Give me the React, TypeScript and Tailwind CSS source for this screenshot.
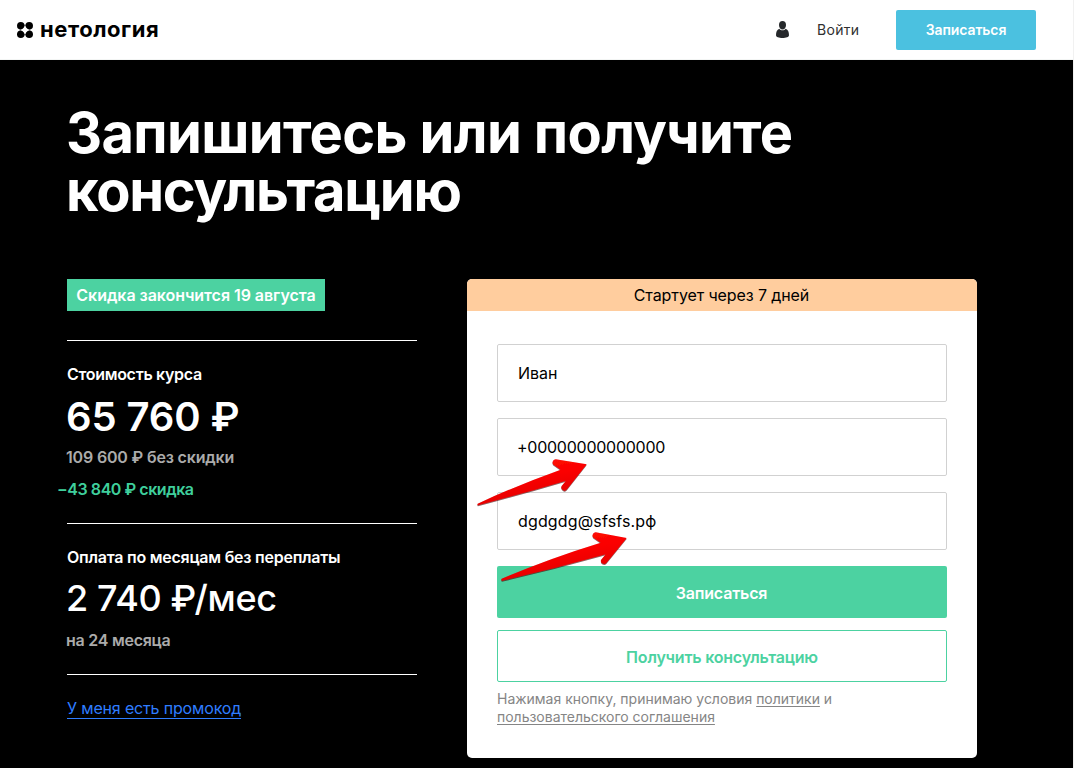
import type { ReactNode } from "react";

function LogoMark() {
  return (
    <svg width="16" height="16" viewBox="0 0 16 16" className="shrink-0" fill="#000">
      <circle cx="3.8" cy="3.8" r="3.8" />
      <circle cx="12.2" cy="3.8" r="3.8" />
      <circle cx="3.8" cy="12.2" r="3.8" />
      <circle cx="12.2" cy="12.2" r="3.8" />
      <path d="M6.500 2.700H9.500V4.700H6.500ZM6.500 11.300H9.500V13.300H6.500ZM2.700 6.500H4.700V9.500H2.700ZM11.300 6.500H13.300V9.500H11.300Z" fillOpacity="0.3" />
      <path d="M8 3.800L9.700 6.300L12.200 8L9.700 9.700L8 12.200L6.300 9.700L3.800 8L6.300 6.300Z" fill="#fff" />
    </svg>
  );
}

function UserIcon() {
  return (
    <svg width="13" height="17" viewBox="0 0 13 17" fill="#25282b">
      <path d="M6.5 0C8.8 0 10 1.5 10 3.9C10 6.500 8.600 8.600 6.500 8.600C4.400 8.600 3 6.500 3 3.900C3 1.500 4.200 0 6.500 0Z" />
      <path d="M3.300 7.700C4.200 8.800 5.200 9.300 6.500 9.300C7.800 9.300 8.800 8.800 9.700 7.700C12 8.500 13 10.800 13 14.200C13 15.900 10 17 6.500 17C3 17 0 15.900 0 14.200C0 10.800 1 8.500 3.300 7.700Z" />
    </svg>
  );
}

function Arrows() {
  return (
    <svg width="180" height="150" viewBox="0 0 540 450" className="pointer-events-none absolute left-0 top-[156px]">
      <defs>
        <linearGradient id="arrow" x1="0" y1="0" x2="0.4" y2="1">
          <stop offset="0" stopColor="#ff1010" />
          <stop offset="0.5" stopColor="#fb0300" />
          <stop offset="1" stopColor="#e00000" />
        </linearGradient>
        <filter id="shadow" x="-10%" y="-10%" width="120%" height="125%">
          <feDropShadow dx="0" dy="2.500" stdDeviation="1.500" floodColor="#400" floodOpacity="0.75" />
        </filter>
      </defs>
      <g fill="url(#arrow)" filter="url(#shadow)">
        <path d="M32 206Q30 209 33 211Q165 176 297 137L284 153A9.500 9.500 0 0 0 300 163L359 88L266 73A9.500 9.500 0 0 0 262 91L281 104Q152 150 32 206Z" />
        <path d="M104 431Q101 435 105 437Q260 402 416 358L402 375A9.500 9.500 0 0 0 418 384L479 309L386 292A9.500 9.500 0 0 0 382 310L401 323Q245 371 104 431Z" />
      </g>
    </svg>
  );
}

function Field({ children }: { children: ReactNode }) {
  return (
    <div className="flex h-[58px] items-center rounded-[2px] border border-[#d1d1d1] pl-5 text-base text-black">
      {children}
    </div>
  );
}

export default function App() {
  return (
    <div className="flex h-[768px] w-[1074px] flex-col overflow-hidden border-r border-[#f1f1f1] bg-black font-['Inter',sans-serif]">
      <header className="flex h-[60px] shrink-0 items-center border-b border-[#f3f5f4] bg-white pl-[17px] pr-[37px]">
        <div className="flex items-center gap-[7px]">
          <LogoMark />
          <span className="pb-px text-[22px] font-bold leading-7 tracking-[0.55px] text-black">нетология</span>
        </div>
        <div className="ml-auto flex items-center">
          <UserIcon />
          <span className="ml-[28px] w-[43px] text-sm tracking-[0.3px] text-[#303030]">Войти</span>
          <button className="ml-[36px] h-10 w-[140px] rounded-[2px] bg-[#4bc1e0] text-sm font-semibold tracking-[-0.1px] text-white">
            Записаться
          </button>
        </div>
      </header>

      <main className="flex flex-col pl-[67px] pt-[44px]">
        <h1 className="-ml-px whitespace-nowrap text-[56px] font-bold leading-[58px] text-white">
          <span className="block tracking-[-0.65px]">Запишитесь или получите</span>
          <span className="block tracking-[-1.25px]">консультацию</span>
        </h1>

        <div className="mt-[59px] flex gap-[50px]">
          <section className="flex w-[350px] flex-col items-start whitespace-nowrap text-base leading-6 text-white">
            <div className="flex h-8 w-[258px] items-center justify-center bg-[#4cd2a1] font-semibold tracking-[-0.05px]">
              Скидка закончится 19 августа
            </div>
            <div className="mt-[29px] h-px w-full bg-white" />
            <div className="mt-[21px] font-semibold tracking-[-0.3px]">Стоимость курса</div>
            <div className="mt-[7px] -ml-px text-[40px] font-semibold leading-[48px] tracking-[-0.1px]">65 760 ₽</div>
            <div className="-ml-px mt-1 font-semibold tracking-[-0.17px] text-[#ababab]">109 600 ₽ без скидки</div>
            <div className="mt-2 -ml-[10px] font-semibold tracking-[-0.45px] text-[#3fcf9c]">−43 840 ₽ скидка</div>
            <div className="mt-[22px] h-px w-full bg-white" />
            <div className="mt-[21px] font-semibold tracking-[-0.240px]">Оплата по месяцам без переплаты</div>
            <div className="mt-[7px] -ml-px text-[36px] font-medium leading-[44px] tracking-[-0.350px]">2 740 ₽/мес</div>
            <div className="mt-2 -ml-px font-semibold tracking-[-0.25px] text-[#ababab]">на 24 месяца</div>
            <div className="mt-[22px] h-px w-full bg-white" />
            <a className="mt-[23px] border-b border-[#2f7dff] leading-5 tracking-[-0.160px] text-[#2f7dff]">
              У меня есть промокод
            </a>
          </section>

          <section className="relative h-[479px] w-[510px] overflow-hidden rounded-[5px] bg-white">
            <div className="flex h-8 items-center justify-center bg-[#ffcd9e] pr-px text-base tracking-[-0.1px] text-black">
              Стартует через 7 дней
            </div>
            <div className="flex flex-col px-[30px] pt-[33px]">
              <div className="flex flex-col gap-4">
                <Field>Иван</Field>
                <Field><span className="-ml-px tracking-[-0.250px]">+00000000000000</span></Field>
                <Field><span className="tracking-[0.150px]">dgdgdg@sfsfs.рф</span></Field>
              </div>
              <button className="mt-4 h-[52px] rounded-[2px] bg-[#4cd2a1] pr-px pt-[2px] text-base font-semibold tracking-[-0.180px] text-white">
                Записаться
              </button>
              <button className="mt-3 h-[52px] rounded-[2px] border border-[#4cd2a1] pt-[2px] text-base font-semibold tracking-[-0.2px] text-[#4cd2a1]">
                Получить консультацию
              </button>
              <p className="mt-2 whitespace-nowrap text-sm leading-[18px] tracking-[-0.01px] text-[#858585]">
                Нажимая кнопку, принимаю условия <a className="underline underline-offset-2">политики</a> и<br />
                <a className="underline underline-offset-2">пользовательского соглашения</a>
              </p>
            </div>
            <Arrows />
          </section>
        </div>
      </main>
    </div>
  );
}
